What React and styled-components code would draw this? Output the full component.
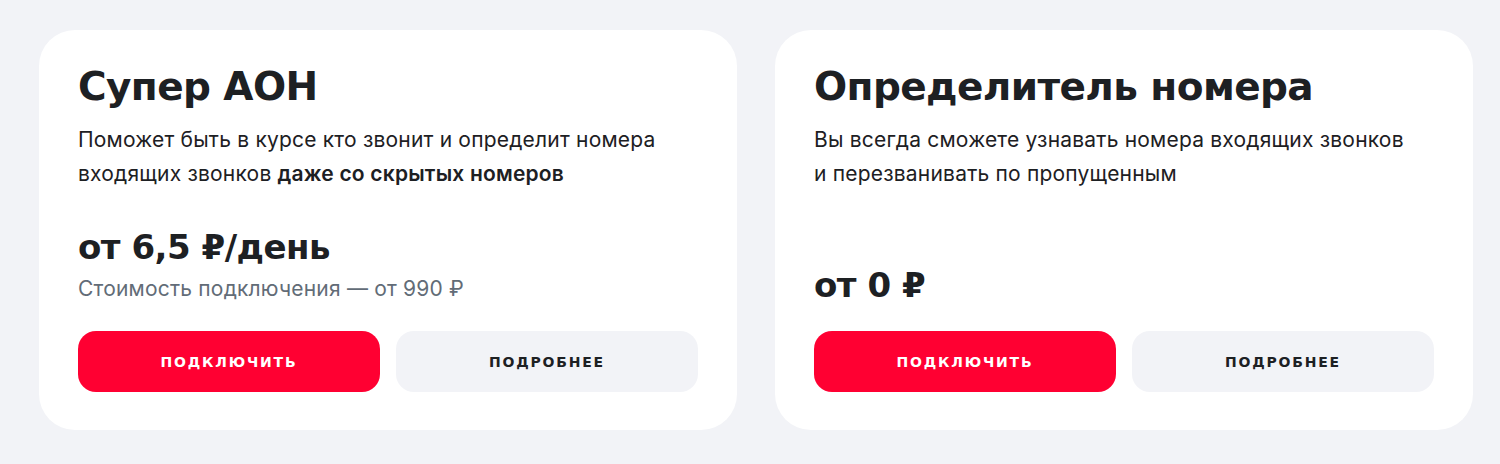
import styled, { createGlobalStyle } from "styled-components";

const GlobalStyle = createGlobalStyle`
  html, body {
    margin: 0;
    padding: 0;
    background: #f2f3f7;
  }
`;

const Page = styled.div`
  display: grid;
  grid-template-columns: 698px 698px;
  gap: 38px;
  padding: 30px 27px 34px 39px;
  box-sizing: border-box;
  width: 1500px;
  height: 464px;
  background: #f2f3f7;
`;

const Card = styled.section`
  display: flex;
  flex-direction: column;
  background: #ffffff;
  border-radius: 36px;
  padding: 35px 39px 38px;
  box-sizing: border-box;
  height: 400px;
  color: #1d2023;
`;

const Title = styled.h2`
  margin: 0;
  font-family: "DejaVu Sans", sans-serif;
  font-weight: 700;
  font-size: 39px;
  line-height: 44px;
  letter-spacing: -0.6px;
`;

const Description = styled.p`
  margin: 14px 0 0;
  font-family: Inter, Roboto, sans-serif;
  font-size: 21px;
  line-height: 34px;
  letter-spacing: 0.2px;
  color: #1d2023;

  b {
    font-weight: 600;
  }
`;

const PriceBlock = styled.div`
  margin-top: auto;
  display: flex;
  flex-direction: column;
  gap: 10px;
`;

const Price = styled.div`
  font-family: "DejaVu Sans", sans-serif;
  font-weight: 700;
  font-size: 34px;
  line-height: 36px;
  letter-spacing: -0.5px;
`;

const Note = styled.div`
  font-family: Inter, Roboto, sans-serif;
  font-size: 21px;
  line-height: 28px;
  letter-spacing: 0.2px;
  color: #626c77;
`;

const Actions = styled.div`
  display: grid;
  grid-template-columns: 1fr 1fr;
  gap: 16px;
  margin-top: 28px;
`;

const Button = styled.button`
  height: 61px;
  border: none;
  border-radius: 18px;
  background: ${(p) => (p.$primary ? "#ff0032" : "#f2f3f7")};
  color: ${(p) => (p.$primary ? "#ffffff" : "#1d2023")};
  font-family: "DejaVu Sans", sans-serif;
  font-weight: 700;
  font-size: 14px;
  letter-spacing: 1.8px;
  text-transform: uppercase;
  cursor: pointer;
`;

const offers = [
  {
    title: "Супер АОН",
    text: (
      <>
        Поможет быть в курсе кто звонит и определит номера
        <br />
        входящих звонков <b>даже со скрытых номеров</b>
      </>
    ),
    price: "от 6,5 ₽/день",
    note: "Стоимость подключения — от 990 ₽",
  },
  {
    title: "Определитель номера",
    text: (
      <>
        Вы всегда сможете узнавать номера входящих звонков
        <br />
        и перезванивать по пропущенным
      </>
    ),
    price: "от 0 ₽",
  },
];

export default function App() {
  return (
    <>
      <GlobalStyle />
      <Page>
        {offers.map((o) => (
          <Card key={o.title}>
            <Title>{o.title}</Title>
            <Description>{o.text}</Description>
            <PriceBlock>
              <Price>{o.price}</Price>
              {o.note && <Note>{o.note}</Note>}
            </PriceBlock>
            <Actions>
              <Button $primary>Подключить</Button>
              <Button>Подробнее</Button>
            </Actions>
          </Card>
        ))}
      </Page>
    </>
  );
}
